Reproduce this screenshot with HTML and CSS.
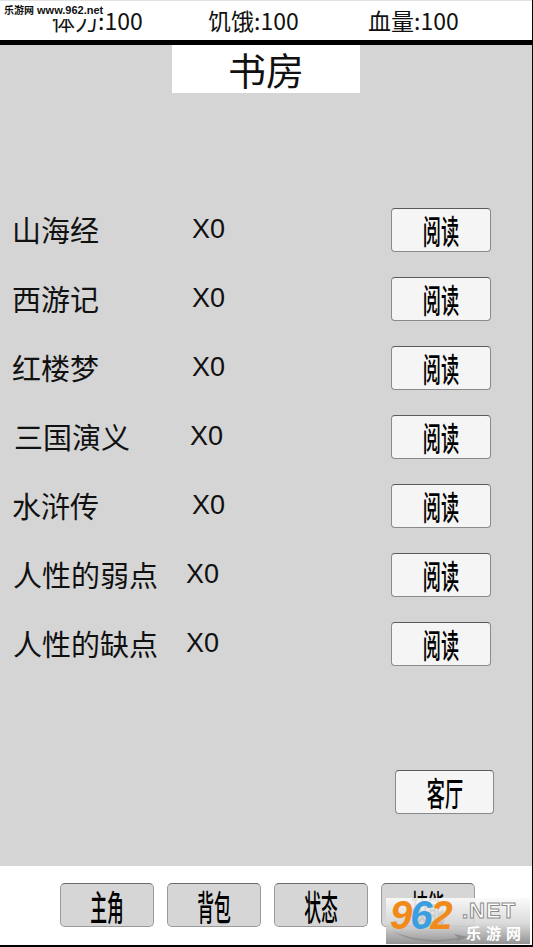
FILE: index.html
```html
<!DOCTYPE html>
<html lang="zh">
<head>
<meta charset="utf-8">
<title>书房</title>
<link rel="stylesheet" href="styles.css">
</head>
<body>
<div class="page">
  <header class="stats">
    <div class="stat">体力:100</div>
    <div class="stat">饥饿:100</div>
    <div class="stat">血量:100</div>
  </header>
  <main class="room">
    <div class="title">书房</div>
    <div class="books">
      <div class="row"><span class="name">山海经</span><span class="count">X0</span><button class="btn"><span class="cond">阅读</span></button></div>
      <div class="row"><span class="name">西游记</span><span class="count">X0</span><button class="btn"><span class="cond">阅读</span></button></div>
      <div class="row"><span class="name">红楼梦</span><span class="count">X0</span><button class="btn"><span class="cond">阅读</span></button></div>
      <div class="row row-mid"><span class="name">三国演义</span><span class="count">X0</span><button class="btn"><span class="cond">阅读</span></button></div>
      <div class="row"><span class="name">水浒传</span><span class="count">X0</span><button class="btn"><span class="cond">阅读</span></button></div>
      <div class="row row-long"><span class="name">人性的弱点</span><span class="count">X0</span><button class="btn"><span class="cond">阅读</span></button></div>
      <div class="row row-long"><span class="name">人性的缺点</span><span class="count">X0</span><button class="btn"><span class="cond">阅读</span></button></div>
    </div>
    <div class="exit"><button class="btn btn-exit"><span class="cond">客厅</span></button></div>
  </main>
  <footer class="nav">
    <button class="tab"><span class="cond">主角</span></button>
    <button class="tab"><span class="cond">背包</span></button>
    <button class="tab"><span class="cond">状态</span></button>
    <button class="tab"><span class="cond">技能</span></button>
  </footer>
  <div class="wm-top"><span class="wm-cn">乐游网</span> www.962.net</div>
  <div class="wm-logo">
    <span class="wm-num"><span class="o">9</span><span class="b">6</span><span class="o">2</span></span><span class="wm-net">.NET</span>
    <span class="wm-site">乐游网</span>
    <svg class="wm-swoosh" width="80" height="14" viewBox="0 0 80 14"><path d="M2 1 Q30 14 68 8 L64 4 L78 7 L66 12 L67 10 Q30 17 2 1 Z" fill="#8e8e8e"/></svg>
  </div>
</div>
</body>
</html>
```

FILE: styles.css
```css
* { box-sizing: border-box; }
html, body { margin: 0; padding: 0; }
body {
  width: 533px;
  height: 947px;
  font-family: "Noto Sans CJK SC", "Liberation Sans", sans-serif;
  color: #111;
  background: #fff;
  overflow: hidden;
}
.page {
  position: relative;
  width: 533px;
  height: 947px;
  border-right: 1px solid #000;
  display: flex;
  flex-direction: column;
}
.stats {
  height: 45px;
  border-top: 1px solid #e2e2e2;
  border-bottom: 5px solid #000;
  background: #fff;
  display: grid;
  grid-template-columns: 156px 160px auto;
  padding-left: 52px;
  align-items: center;
  font-size: 23px;
  line-height: 1;
}
.stat { white-space: nowrap; }
.room {
  flex: none;
  height: 821px;
  background: #d5d5d5;
  display: flex;
  flex-direction: column;
}
.title {
  margin-left: 172px;
  width: 188px;
  height: 48px;
  background: #fff;
  font-size: 38px;
  line-height: 48px;
  text-align: center;
}
.books {
  margin-top: 115px;
  display: flex;
  flex-direction: column;
  gap: 25px;
}
.row {
  height: 44px;
  display: grid;
  grid-template-columns: 180px 199px 100px;
  padding-left: 12px;
  align-items: center;
}
.row-mid { padding-left: 14px; grid-template-columns: 176px 201px 100px; }
.row-long { padding-left: 13px; grid-template-columns: 173px 205px 100px; }
.name { font-size: 29px; line-height: 1; white-space: nowrap; margin-top: -2px; }
.count {
  font-family: "Liberation Sans", sans-serif;
  font-size: 27px;
  line-height: 1;
  margin-top: -2px;
}
.btn {
  width: 100px;
  height: 44px;
  padding: 0;
  background: #f5f5f5;
  border: 1px solid #8a8a8a;
  border-top-color: #5a5a5a;
  border-radius: 4px;
  display: flex;
  align-items: center;
  justify-content: center;
  font-family: "Noto Sans CJK SC", sans-serif;
  color: #000;
}
.cond {
  display: inline-block;
  font-size: 33px;
  font-weight: 500;
  line-height: 1;
  transform: scaleX(0.55);
  white-space: nowrap;
}
.exit {
  margin-top: 104px;
  padding-left: 395px;
}
.btn-exit { width: 99px; }
.nav {
  flex: 1;
  background: #fff;
  border-bottom: 2px solid #000;
  display: flex;
  gap: 13px;
  padding: 17px 0 0 60px;
}
.tab {
  width: 94px;
  height: 44px;
  padding: 0;
  background: #d6d6d6;
  border: 1px solid #9a9a9a;
  border-top-color: #6a6a6a;
  border-radius: 5px;
  display: flex;
  align-items: center;
  justify-content: center;
  color: #000;
  font-family: "Noto Sans CJK SC", sans-serif;
}
.tab .cond { font-size: 35px; font-weight: 500; transform: scaleX(0.48); }
.wm-top {
  position: absolute;
  left: 0;
  top: 2px;
  height: 17px;
  width: 98px;
  padding-left: 4px;
  background: #fff;
  font-family: "Liberation Sans", "Noto Sans CJK SC", sans-serif;
  font-size: 11px;
  font-weight: bold;
  line-height: 17px;
  white-space: nowrap;
  color: #111;
}
.wm-cn { font-size: 10px; }
.wm-logo {
  position: absolute;
  left: 386px;
  top: 898px;
  width: 144px;
  height: 46px;
  background: linear-gradient(to bottom, rgba(250,250,250,0.9) 0%, rgba(215,215,215,0.9) 55%, rgba(140,140,140,0.95) 100%);
  font-family: "Liberation Sans", sans-serif;
  overflow: hidden;
}
.wm-num {
  position: absolute;
  left: 4px;
  top: -7px;
  font-size: 40px;
  font-weight: bold;
  font-style: italic;
  letter-spacing: -2px;
  line-height: 1.2;
}
.wm-num .o { color: #f28a1a; }
.wm-num .b { color: #3b9ee0; }
.wm-net {
  position: absolute;
  left: 76px;
  top: 1px;
  font-size: 22px;
  font-weight: bold;
  color: #fff;
  -webkit-text-stroke: 1px #8a8a8a;
  letter-spacing: 1px;
  line-height: 1.1;
}
.wm-site {
  position: absolute;
  left: 80px;
  top: 27px;
  font-family: "Noto Sans CJK SC", sans-serif;
  font-size: 15px;
  font-weight: bold;
  letter-spacing: 5px;
  color: #fff;
  line-height: 1;
}
.wm-swoosh {
  position: absolute;
  left: 4px;
  top: 32px;
}
```
